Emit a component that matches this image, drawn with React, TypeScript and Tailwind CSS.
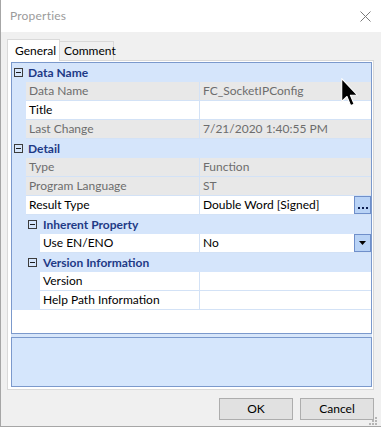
import React from 'react';

type Row =
  | { kind: 'cat'; level: 0 | 1; label: string }
  | { kind: 'prop'; level: 0 | 1; name: string; value?: string; readOnly?: boolean; button?: 'ellipsis' | 'dropdown' };

const rows: Row[] = [
  { kind: 'cat', level: 0, label: 'Data Name' },
  { kind: 'prop', level: 0, name: 'Data Name', value: 'FC_SocketIPConfig', readOnly: true },
  { kind: 'prop', level: 0, name: 'Title', value: '' },
  { kind: 'prop', level: 0, name: 'Last Change', value: '7/21/2020 1:40:55 PM', readOnly: true },
  { kind: 'cat', level: 0, label: 'Detail' },
  { kind: 'prop', level: 0, name: 'Type', value: 'Function', readOnly: true },
  { kind: 'prop', level: 0, name: 'Program Language', value: 'ST', readOnly: true },
  { kind: 'prop', level: 0, name: 'Result Type', value: 'Double Word [Signed]', button: 'ellipsis' },
  { kind: 'cat', level: 1, label: 'Inherent Property' },
  { kind: 'prop', level: 1, name: 'Use EN/ENO', value: 'No', button: 'dropdown' },
  { kind: 'cat', level: 1, label: 'Version Information' },
  { kind: 'prop', level: 1, name: 'Version', value: '' },
  { kind: 'prop', level: 1, name: 'Help Path Information', value: '' },
];

const MinusBox = () => (
  <div className="w-[9px] h-[9px] border border-[#3c3c3c] flex items-center justify-center shrink-0">
    <div className="w-[5px] h-px bg-[#1e1e1e]" />
  </div>
);

const CategoryRow = ({ level, label }: { level: 0 | 1; label: string }) => (
  <div className={`flex items-center h-[19px] bg-[#d5e5fb] ${level === 0 ? 'pl-[2px] gap-[5px]' : 'pl-[16px] gap-[6px]'}`}>
    <MinusBox />
    <span className="font-bold text-[12px] text-[#1e3a86] leading-[18px]">{label}</span>
  </div>
);

const PropRow = ({ row }: { row: Extract<Row, { kind: 'prop' }> }) => {
  const cell = row.readOnly ? 'bg-[#e8e8e8] text-[#6d6d6d]' : 'bg-white text-black';
  return (
    <div className="flex h-[19px] bg-[#d5e5fb]">
      <div className={row.level === 0 ? 'w-[14px] shrink-0' : 'w-[28px] shrink-0'} />
      <div className={`${row.level === 0 ? 'w-[174px]' : 'w-[160px]'} shrink-0 border-r border-b border-[#d3e2f6] pl-[3px] leading-[18px] text-[12px] ${cell}`}>
        {row.name}
      </div>
      <div className={`flex-1 flex border-b border-[#d3e2f6] text-[12px] leading-[18px] ${cell}`}>
        <span className="flex-1 pl-[3px] whitespace-nowrap overflow-hidden">{row.value}</span>
        {row.button === 'ellipsis' && (
          <div className="w-[17px] h-[18px] bg-[#b9d3f6] border border-[#6f8fca] flex items-end justify-center pb-[4px]">
            <div className="flex gap-[2px]">
              <div className="w-[2px] h-[2px] bg-[#0c1d4f]" />
              <div className="w-[2px] h-[2px] bg-[#0c1d4f]" />
              <div className="w-[2px] h-[2px] bg-[#0c1d4f]" />
            </div>
          </div>
        )}
        {row.button === 'dropdown' && (
          <div className="w-[17px] h-[18px] bg-[#b9d3f6] border border-[#6f8fca] flex items-center justify-center">
            <svg width="7" height="4" viewBox="0 0 7 4">
              <path d="M0 0 H7 L3.5 4 Z" fill="#000" />
            </svg>
          </div>
        )}
      </div>
    </div>
  );
};

export default function App() {
  return (
    <div className="w-[381px] h-[431px] bg-white relative overflow-hidden" style={{ fontFamily: 'Lato, "Noto Sans", sans-serif' }}>
      <div className="h-[427px] border-l border-b border-[#a6a6a6] bg-[#f0f0f0] flex flex-col">
        {/* Title bar */}
        <div className="h-[32px] bg-white flex items-center justify-between pl-[9px] pr-[10px] shrink-0">
          <span className="text-[12px] text-[#9b9b9b] tracking-[0.2px]">Properties</span>
          <svg width="11" height="11" viewBox="0 0 11 11">
            <path d="M0.5 0.5 L10.5 10.5 M10.5 0.5 L0.5 10.5" stroke="#7a7a7a" strokeWidth="1" />
          </svg>
        </div>

        <div className="flex-1 flex flex-col pl-[6px] pr-[7px] pt-[6px]">
          {/* Tabs */}
          <div className="flex items-end h-[22px] text-[12px]">
            <div className="h-[22px] w-[53px] bg-white border-t border-l border-r border-[#d9d9d9] pl-[7px] pt-[2px] relative z-10 -mb-px text-black">
              General
            </div>
            <div className="h-[19px] w-[54px] bg-[#f0f0f0] border-t border-r border-[#d9d9d9] pl-[4px] text-black leading-[18px]">
              Comment
            </div>
          </div>

          {/* Tab page */}
          <div className="h-[330px] bg-white border border-[#d9d9d9] pl-[3px] pr-[1px] pt-[1px] flex flex-col">
            <div className="h-[272px] border border-[#7b99cc] flex flex-col bg-white">
              {rows.map((r, i) =>
                r.kind === 'cat' ? <CategoryRow key={i} level={r.level} label={r.label} /> : <PropRow key={i} row={r} />
              )}
            </div>
            <div className="h-[3px] bg-[#d7e6fa]" />
            <div className="h-[50px] border border-[#7b99cc] bg-[#d5e6fc]" />
          </div>

          {/* Buttons */}
          <div className="flex justify-end gap-[7px] mt-[8px] text-[12px]">
            <button className="w-[74px] h-[22px] bg-[#e1e1e1] border border-[#adadad] text-black">OK</button>
            <button className="w-[74px] h-[22px] bg-[#e1e1e1] border border-[#adadad] text-black">Cancel</button>
          </div>
        </div>
      </div>

      {/* resize grip */}
      <svg className="absolute left-[369px] top-[417px]" width="9" height="9" viewBox="0 0 9 9">
        {[[6, 0], [3, 3], [6, 3], [0, 6], [3, 6], [6, 6]].map(([x, y], i) => (
          <rect key={i} x={x} y={y} width="2" height="2" fill="#b5b5b5" />
        ))}
      </svg>

      {/* mouse cursor */}
      <svg className="absolute left-[341px] top-[78px]" width="18" height="29" viewBox="0 0 13 21">
        <path d="M0.5 0.5 V17 L4.3 13.4 L7 20 L9.5 19 L6.8 12.5 H12 Z" fill="#000" stroke="#fff" strokeWidth="0.8" strokeLinejoin="round" />
      </svg>
    </div>
  );
}
